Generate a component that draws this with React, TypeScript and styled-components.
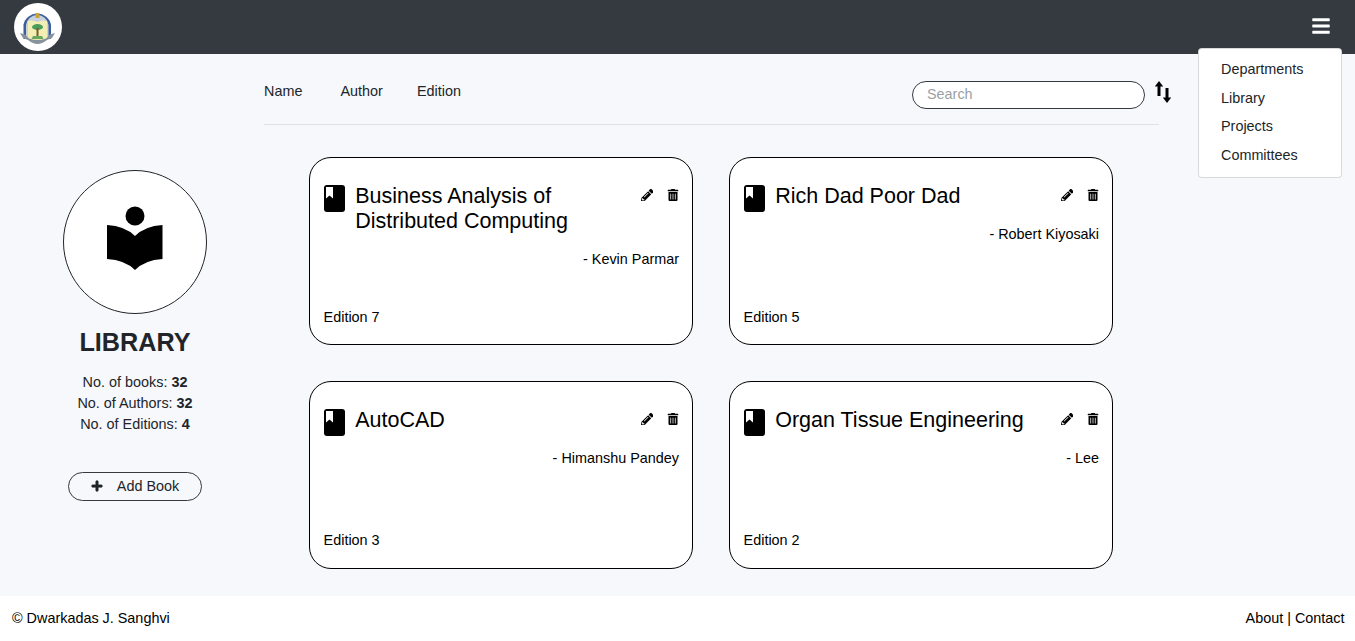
import React from "react";
import styled, { createGlobalStyle } from "styled-components";
import { FaBars, FaPencilAlt, FaPlus, FaTrashAlt } from "react-icons/fa";

const Global = createGlobalStyle`
  html, body { margin: 0; padding: 0; }
  body { font-family: "Liberation Sans", Arial, sans-serif; color: #212529; background: #f6f8fc; }
  * { box-sizing: border-box; }
`;
const Page = styled.div`height: 641px; display: flex; flex-direction: column; position: relative; overflow: hidden;`;
const Navbar = styled.header`height: 54px; background: #343a40; display: flex; align-items: center; justify-content: space-between; padding: 0 24px 0 14px; flex: none;`;
const LogoWrap = styled.div`width: 48px; height: 48px; border-radius: 50%; background: #fff; display: flex;`;
const MenuButton = styled.button`background: none; border: 0; padding: 0; margin-bottom: 2px; color: #fff; display: flex; font-size: 20px;`;
const Dropdown = styled.nav`position: absolute; top: 48px; left: 1198px; width: 144px; height: 130px; background: #fff; border: 1px solid rgba(0,0,0,.15); border-radius: 4px; padding: 6px 0 0 22px; display: flex; flex-direction: column;`;
const DropItem = styled.a`font-size: 14.4px; line-height: 28.67px; color: #212529;`;
const Content = styled.main`flex: 1; display: flex; min-height: 0;`;
const Sidebar = styled.aside`width: 264px; padding-left: 6px; flex: none; display: flex; flex-direction: column; align-items: center; padding-top: 116px;`;
const Circle = styled.div`width: 144px; height: 144px; border-radius: 50%; border: 1px solid #212529; background: #fff; display: flex; align-items: center; justify-content: center; color: #000;`;
const ReaderIcon = styled.svg`margin-bottom: 7px;`;
const Title = styled.h2`margin: 13px 0 0; font-size: 25.2px; line-height: 30px; font-weight: 700; color: #212529;`;
const Stats = styled.div`margin-top: 15px; font-size: 14.4px; line-height: 21px; text-align: center; color: #212529;`;
const AddButton = styled.button`margin-top: 37px; width: 134px; height: 29px; border: 1px solid #343a40; border-radius: 15px; background: transparent; font: 14.4px "Liberation Sans", sans-serif; color: #212529; display: flex; align-items: center; justify-content: center; gap: 14px; padding: 0 0 2px;`;
const PlusIcon = styled(FaPlus)`font-size: 12px; color: #212529; stroke: currentColor; stroke-width: 30px;`;
const Main = styled.section`width: 895px; flex: none;`;
const Toolbar = styled.div`height: 71px; border-bottom: 1px solid #dee2e6; display: flex; align-items: flex-start; padding-top: 28px; position: relative;`;
const Tab = styled.span<{ $w: number }>`width: ${p => p.$w}px; font-size: 14.4px; line-height: 18px; color: #212529;`;
const Search = styled.input`margin: -1px 14px 0 auto; width: 233px; height: 28px; border: 1px solid #343a40; border-radius: 14px; background: #fff; padding: 0 14px 3px; font: 14.4px "Liberation Sans", sans-serif; &::placeholder { color: #9a9fa5; opacity: 1; }`;
const SortIcon = styled.svg`position: absolute; left: 890px; top: 26px;`;
const Grid = styled.div`display: grid; grid-template-columns: 384px 384px; grid-auto-rows: 188px; column-gap: 36px; row-gap: 35.6px; margin: 32.4px 0 0 45px;`;
const Card = styled.article`background: #fff; border: 1px solid #000; border-radius: 22px; padding: 26px 13px 0 14px; display: flex; flex-direction: column; position: relative;`;
const CardHead = styled.div`display: flex; align-items: flex-start;`;
const BookIcon = styled.svg`flex: none; margin-top: 1px;`;
const CardTitle = styled.h3`margin: 0 0 17px 10.2px; flex: 1; font-size: 21.5px; line-height: 25px; font-weight: 400; color: #000; padding-right: 50px;`;
const Actions = styled.div`position: absolute; top: 30.6px; right: 13.5px; display: flex; gap: 13.5px; color: #000; align-items: center;`;
const Pencil = styled(FaPencilAlt)`font-size: 12.5px;`;
const Trash = styled(FaTrashAlt)`font-size: 12px;`;
const AuthorLine = styled.div`text-align: right; font-size: 14.4px; line-height: 17px; color: #000;`;
const Edition = styled.div`position: absolute; left: 13.6px; bottom: 18.6px; font-size: 14.4px; line-height: 17px; color: #000;`;
const Footer = styled.footer`height: 45px; background: #fff; flex: none; display: flex; justify-content: space-between; padding: 14px 10.5px 0 12px; font-size: 14.4px; line-height: 17px; color: #000;`;

const Logo = () => (
  <svg width="48" height="48" viewBox="0 0 48 48">
    <path d="M9.500 36V21.500a14 13.500 0 0 1 27.500 0V36z" fill="#3c5f9c" />
    <path d="M12 36V22a11.300 11 0 0 1 22.500 0v14z" fill="#c9d2dc" />
    <path d="M14 18q4.500-1.500 9.500 1 5-2.500 9.500-1v19H14z" fill="#f3efb4" />
    <ellipse cx="23.500" cy="24" rx="5.500" ry="3" fill="#4c9c5c" />
    <rect x="22.500" y="25" width="2" height="9" fill="#7a5a2a" />
    <path d="M19 33h9l1.500 3h-12z" fill="#6aa860" />
    <path d="M6 30l5 1.500 4 4q8.500 3 17 0l4-4 5-1.500-3 5-5 2q-5 4-9.500 4t-9.500-4l-5-2z" fill="#87929c" />
    <path d="M21.500 10h4v5h-4z" fill="#c8a53a" />
  </svg>
);

const Reader = () => (
  <ReaderIcon width="56" height="65" viewBox="0 0 56 65">
    <circle cx="28" cy="10" r="9.500" fill="#000" />
    <path d="M0 19Q18 20 28 30 38 20 55.500 19V53Q38 54 28 64 18 54 0 53Z" fill="#000" />
  </ReaderIcon>
);

const Book = () => (
  <BookIcon width="21" height="27" viewBox="0 0 21 27">
    <rect width="21" height="27" rx="3" fill="#000" />
    <path d="M2 2h7v11.500l-3.500-3-3.500 3z" fill="#fff" />
  </BookIcon>
);

const books = [
  { title: "Business Analysis of Distributed Computing", author: "Kevin Parmar", ed: 7 },
  { title: "Rich Dad Poor Dad", author: "Robert Kiyosaki", ed: 5 },
  { title: "AutoCAD", author: "Himanshu Pandey", ed: 3 },
  { title: "Organ Tissue Engineering", author: "Lee", ed: 2 },
];

export default function App() {
  return (
    <Page>
      <Global />
      <Navbar>
        <LogoWrap><Logo /></LogoWrap>
        <MenuButton aria-label="menu"><FaBars /></MenuButton>
      </Navbar>
      <Dropdown>
        {["Departments", "Library", "Projects", "Committees"].map(i => <DropItem key={i}>{i}</DropItem>)}
      </Dropdown>
      <Content>
        <Sidebar>
          <Circle><Reader /></Circle>
          <Title>LIBRARY</Title>
          <Stats>
            <div>No. of books: <b>32</b></div>
            <div>No. of Authors: <b>32</b></div>
            <div>No. of Editions: <b>4</b></div>
          </Stats>
          <AddButton><PlusIcon /><span>Add Book</span></AddButton>
        </Sidebar>
        <Main>
          <Toolbar>
            <Tab $w={76.4}>Name</Tab>
            <Tab $w={76.6}>Author</Tab>
            <Tab $w={60}>Edition</Tab>
            <Search placeholder="Search" />
            <SortIcon width="18" height="24" viewBox="0 0 18 24">
              <path d="M5 1L.8 6.500H3.500V16h3V6.500h2.700zM13 23l4.200-5.500H14.500V8h-3v9.500H8.800z" fill="#000" />
            </SortIcon>
          </Toolbar>
          <Grid>
            {books.map(b => (
              <Card key={b.title}>
                <CardHead>
                  <Book />
                  <CardTitle>{b.title}</CardTitle>
                  <Actions><Pencil /><Trash /></Actions>
                </CardHead>
                <AuthorLine>- {b.author}</AuthorLine>
                <Edition>Edition {b.ed}</Edition>
              </Card>
            ))}
          </Grid>
        </Main>
      </Content>
      <Footer>
        <span>© Dwarkadas J. Sanghvi</span>
        <span>About | Contact</span>
      </Footer>
    </Page>
  );
}
